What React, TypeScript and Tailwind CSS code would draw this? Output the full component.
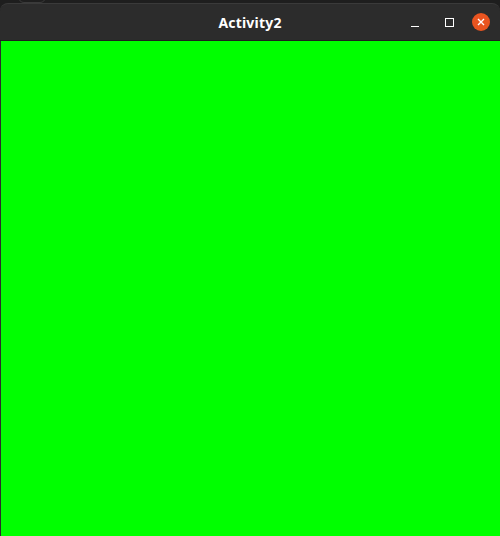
import React from 'react';

export default function App() {
  return (
    <div className="w-[500px] h-[536px] bg-[#1e1e1e] overflow-hidden relative font-['Noto_Sans',sans-serif]">
      {/* background window outline peeking above */}
      <div className="absolute left-[18px] top-[-10px] w-[28px] h-[13px] rounded-b-[6px] border border-[#3a3a3a]" />
      <div className="absolute left-0 top-[3px] w-[500px] h-[533px] flex flex-col">
        {/* TITLE BAR */}
        <div className="h-[38px] bg-[#2c2c2c] rounded-t-[8px] border-t border-[#3a3a3a] border-b border-b-[#1f1f1f] relative flex items-center justify-center">
          <span className="text-white font-bold text-[14px] tracking-[0.2px]">Activity2</span>
          <div className="absolute right-[5px] top-0 h-full flex items-center">
            <div className="w-[32px] h-full flex items-center justify-center">
              <div className="w-[8px] h-[1px] bg-white mt-[8px]" />
            </div>
            <div className="w-[36px] h-full flex items-center justify-center">
              <div className="w-[9px] h-[9px] border border-white" />
            </div>
            <div className="w-[28px] h-full flex items-center justify-center">
              <div className="w-[18px] h-[18px] rounded-full bg-[#e95420] flex items-center justify-center">
                <svg width="8" height="8" viewBox="0 0 8 8">
                  <path d="M1 1L7 7M7 1L1 7" stroke="white" strokeWidth="1.4" />
                </svg>
              </div>
            </div>
          </div>
        </div>
        {/* CONTENT */}
        <div className="flex-1 bg-[#00ff00] border-l border-[#2c2c2c]" />
      </div>
    </div>
  );
}
